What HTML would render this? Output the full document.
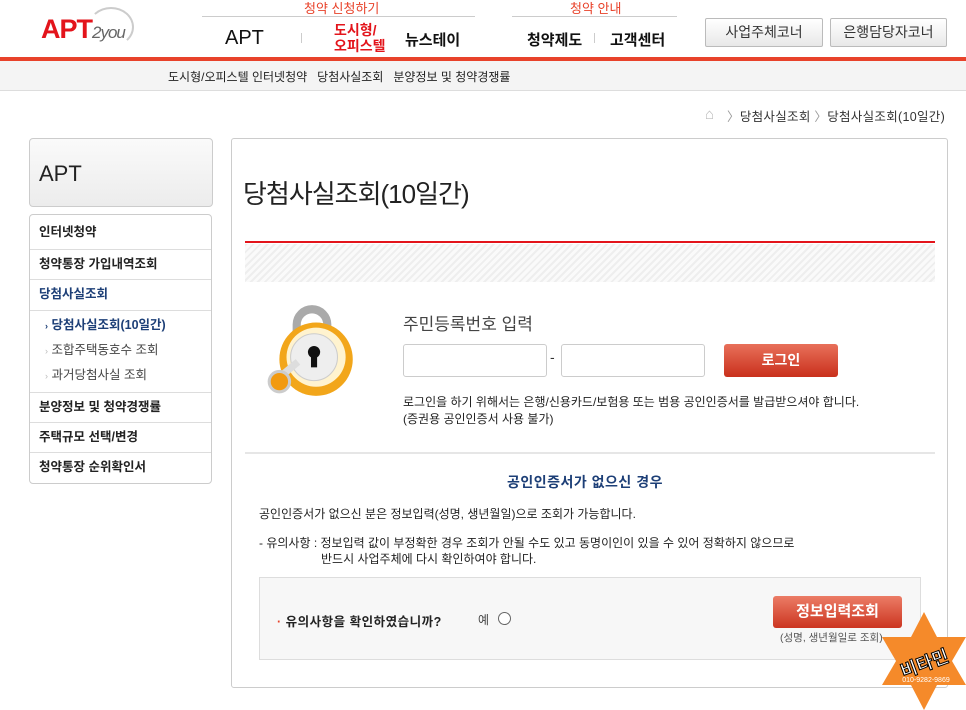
<!DOCTYPE html>
<html><head><meta charset="utf-8"><style>
*{margin:0;padding:0;box-sizing:border-box}
body{width:966px;height:710px;background:#fff;position:relative;overflow:hidden;font-family:"Liberation Sans","Noto Sans CJK KR","NanumGothic",sans-serif;color:#333}
.a{position:absolute;white-space:nowrap}
.btn{position:absolute;border:1px solid #bbb;border-radius:2px;background:linear-gradient(#fff,#e8e8e8);font-size:14px;text-align:center;line-height:27px;color:#333}
.side{position:absolute;left:29px;width:183px;border:1px solid #ccc;border-radius:4px;background:#fff}
.side div{height:30px;line-height:29px;border-bottom:1px solid #ddd;padding-left:9px;font-size:12.5px;font-weight:bold;color:#222}
.side .sub{height:auto;border:none;font-weight:normal;font-size:12.5px;line-height:24px;padding-left:15px;color:#444}
</style></head><body>
<div class="a" style="left:41px;top:14px;font-size:27px;font-weight:bold;color:#e3141b;letter-spacing:-1px">APT<span style="font-size:17px;font-weight:normal;font-style:italic;color:#666">2you</span></div>
<div class="a" style="left:88px;top:7px;width:46px;height:40px;border:2px solid #ccc;border-radius:50%;border-left-color:transparent;border-bottom-color:transparent"></div>
<div class="a" style="left:304px;top:-2px;font-size:13px;color:#e8422a">청약 신청하기</div>
<div class="a" style="left:202px;top:16px;width:273px;height:1px;background:#ccc"></div>
<div class="a" style="left:570px;top:-2px;font-size:13px;color:#e8422a">청약 안내</div>
<div class="a" style="left:512px;top:16px;width:165px;height:1px;background:#ccc"></div>
<div class="a" style="left:225px;top:27px;font-size:20px;color:#111">APT</div>
<div class="a" style="left:301px;top:33px;width:1px;height:10px;background:#ccc"></div>
<div class="a" style="left:334px;top:22px;font-size:14px;line-height:16px;color:#e3141b;font-weight:bold">도시형/<br>오피스텔</div>
<div class="a" style="left:405px;top:29px;font-size:15px;color:#111;font-weight:bold">뉴스테이</div>
<div class="a" style="left:527px;top:29px;font-size:15px;color:#111;font-weight:bold">청약제도</div>
<div class="a" style="left:594px;top:33px;width:1px;height:10px;background:#ccc"></div>
<div class="a" style="left:610px;top:29px;font-size:15px;color:#111;font-weight:bold">고객센터</div>
<div class="btn" style="left:705px;top:18px;width:118px;height:29px">사업주체코너</div>
<div class="btn" style="left:830px;top:18px;width:117px;height:29px">은행담당자코너</div>
<div class="a" style="left:0;top:57px;width:966px;height:4px;background:#e8422a"></div>
<div class="a" style="left:0;top:61px;width:966px;height:30px;background:#f4f4f4;border-bottom:1px solid #ddd"></div>
<div class="a" style="left:168px;top:68px;font-size:12px;color:#222">도시형/오피스텔 인터넷청약 &nbsp;&nbsp;당첨사실조회 &nbsp;&nbsp;분양정보 및 청약경쟁률</div>
<div class="a" style="left:705px;top:106px;font-size:15px;color:#bbb">⌂</div>
<div class="a" style="left:727px;top:106px;font-size:12.5px;color:#333;letter-spacing:0.3px"><span style="color:#999">〉</span>당첨사실조회 <span style="color:#999">〉</span>당첨사실조회(10일간)</div>

<div class="a" style="left:29px;top:138px;width:184px;height:69px;border:1px solid #ccc;border-radius:4px;background:linear-gradient(#fafafa,#ececec)"></div>
<div class="a" style="left:39px;top:161px;font-size:22px;color:#222">APT</div>
<div class="side" style="top:214px">
<div style="height:35px;line-height:34px">인터넷청약</div><div>청약통장 가입내역조회</div><div style="color:#1d3f77;height:31px">당첨사실조회</div>
<div style="height:82px;padding:2px 0 0;line-height:24px"><div class="sub" style="color:#1d3f77;font-weight:bold"><span style="font-size:9px">›</span> 당첨사실조회(10일간)</div><div class="sub"><span style="font-size:9px;color:#bbb">›</span> 조합주택동호수 조회</div><div class="sub"><span style="font-size:9px;color:#bbb">›</span> 과거당첨사실 조회</div></div>
<div>분양정보 및 청약경쟁률</div><div>주택규모 선택/변경</div><div style="border:none">청약통장 순위확인서</div>
</div>

<div class="a" style="left:231px;top:138px;width:717px;height:550px;border:1px solid #ccc;border-radius:3px"></div>
<div class="a" style="left:243px;top:174px;font-size:26px;color:#222;letter-spacing:-1px">당첨사실조회(10일간)</div>
<div class="a" style="left:245px;top:241px;width:690px;height:2px;background:#e3141b"></div>
<div class="a" style="left:245px;top:244px;width:690px;height:38px;background:repeating-linear-gradient(135deg,#eee 0 2px,#fafafa 2px 5px)"></div>
<svg class="a" style="left:262px;top:296px" width="100" height="106" viewBox="0 0 96 104">
<path d="M33 50 V28 a15 15 0 0 1 30 0 V50" fill="none" stroke="#aaa" stroke-width="8"/>
<circle cx="52" cy="62" r="36" fill="#f2a61a"/><circle cx="52" cy="60" r="29" fill="#fff3cf"/>
<circle cx="50" cy="60" r="23" fill="#eee" stroke="#ccc"/>
<circle cx="50" cy="55" r="6" fill="#111"/><rect x="47" y="56" width="6" height="14" fill="#111"/>
<rect x="18" y="67" width="18" height="7" fill="#ddd" transform="rotate(-40 27 70)"/>
<circle cx="16" cy="84" r="10" fill="#f29a10" stroke="#ccc" stroke-width="3"/>
</svg>
<div class="a" style="left:403px;top:310px;font-size:17px;color:#444">주민등록번호 입력</div>
<div class="a" style="left:403px;top:344px;width:144px;height:33px;border:1px solid #ccc;border-radius:3px"></div>
<div class="a" style="left:550px;top:349px;font-size:14px">-</div>
<div class="a" style="left:561px;top:344px;width:144px;height:33px;border:1px solid #ccc;border-radius:3px"></div>
<div class="a" style="left:724px;top:344px;width:114px;height:33px;border-radius:3px;background:linear-gradient(#e8705a,#c9301c);color:#fff;font-size:14px;font-weight:bold;text-align:center;line-height:32px">로그인</div>
<div class="a" style="left:403px;top:394px;font-size:12px;line-height:17px;color:#222">로그인을 하기 위해서는 은행/신용카드/보험용 또는 범용 공인인증서를 발급받으셔야 합니다.<br>(증권용 공인인증서 사용 불가)</div>
<div class="a" style="left:245px;top:452px;width:690px;height:2px;background:#e6e6e6"></div>
<div class="a" style="left:507px;top:472px;font-size:14px;font-weight:bold;color:#1d3f77;letter-spacing:0.5px">공인인증서가 없으신 경우</div>
<div class="a" style="left:259px;top:505px;font-size:12px;color:#222">공인인증서가 없으신 분은 정보입력(성명, 생년월일)으로 조회가 가능합니다.</div>
<div class="a" style="left:259px;top:535px;font-size:12px;line-height:16px;color:#222">- 유의사항 : 정보입력 값이 부정확한 경우 조회가 안될 수도 있고 동명이인이 있을 수 있어 정확하지 않으므로<br><span style="padding-left:62px">반드시 사업주체에 다시 확인하여야 합니다.</span></div>
<div class="a" style="left:259px;top:577px;width:662px;height:83px;border:1px solid #ddd;background:#f7f7f7"></div>
<div class="a" style="left:277px;top:611px;font-size:12.5px;color:#222;font-weight:bold;letter-spacing:0.5px"><span style="color:#e8422a">·</span> 유의사항을 확인하였습니까?</div>
<div class="a" style="left:478px;top:611px;font-size:12px;color:#444">예</div>
<div class="a" style="left:498px;top:612px;width:13px;height:13px;border:1px solid #666;border-radius:50%;background:#fff"></div>
<div class="a" style="left:773px;top:596px;width:129px;height:32px;border-radius:3px;background:linear-gradient(#ec7c66,#cc3520);color:#fff;font-size:15px;font-weight:bold;text-align:center;line-height:31px">정보입력조회</div>
<div class="a" style="left:780px;top:630px;font-size:10.5px;color:#555">(성명, 생년월일로 조회)</div>
<svg class="a" style="left:882px;top:612px" width="84" height="98" viewBox="0 0 84 98"><polygon points="42,0 55,25 84,25 70,49 84,73 55,73 42,98 29,73 0,73 14,49 0,25 29,25" fill="#f58a2a"/>
<text x="42" y="58" font-size="18" font-weight="bold" fill="#fff" stroke="#000" stroke-width="1" text-anchor="middle" transform="rotate(-20 42 50)" font-family="Noto Sans CJK KR,sans-serif">비타민</text>
<text x="44" y="70" font-size="7" fill="#fff" text-anchor="middle">010-9282-9869</text></svg>
</body></html>
